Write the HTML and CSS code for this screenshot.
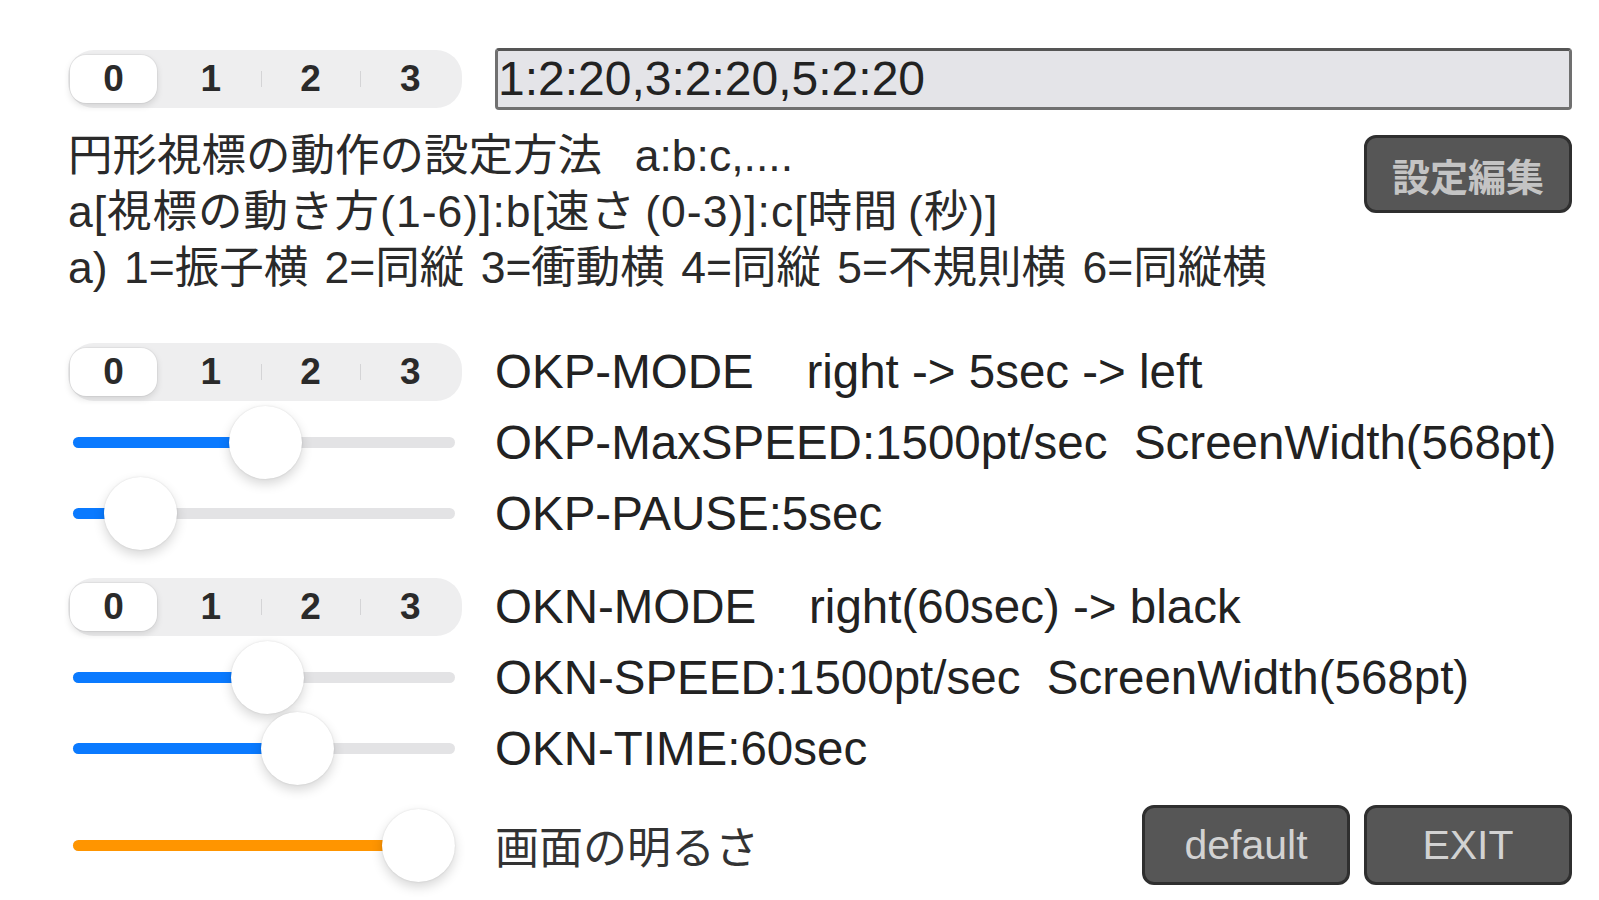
FILE: index.html
```html
<!DOCTYPE html>
<html lang="ja">
<head>
    <meta charset="UTF-8">
    <meta name="viewport" content="width=device-width, initial-scale=1.0">
    <title>視標設定</title>
    <link rel="stylesheet" href="styles.css">
</head>
<body>
    <div class="page">
        <div class="top-row">
            <div class="segmented">
                <span class="seg on">0</span><span class="seg">1</span><span class="seg sep">2</span><span class="seg sep">3</span>
            </div>
            <div class="field">1:2:20,3:2:20,5:2:20</div>
        </div>

        <div class="desc">
            <div class="desc-text">
                <p>円形視標の動作の設定方法&nbsp;&nbsp;a:b:c,....</p>
                <p class="wide">a[視標の動き方(1-6)]:b[速さ (0-3)]:c[時間 (秒)]</p>
                <p>a) 1=振子横 2=同縦 3=衝動横 4=同縦 5=不規則横 6=同縦横</p>
            </div>
            <button class="btn btn-edit">設定編集</button>
        </div>

        <div class="group okp">
            <div class="row">
                <div class="segmented">
                    <span class="seg on">0</span><span class="seg">1</span><span class="seg sep">2</span><span class="seg sep">3</span>
                </div>
                <span class="label">OKP-MODE    right -&gt; 5sec -&gt; left</span>
            </div>
            <div class="row">
                <div class="slider" style="--v: 0.506">
                    <div class="fill"></div>
                    <div class="thumb"></div>
                </div>
                <span class="label">OKP-MaxSPEED:1500pt/sec  ScreenWidth(568pt)</span>
            </div>
            <div class="row">
                <div class="slider" style="--v: 0.1">
                    <div class="fill"></div>
                    <div class="thumb"></div>
                </div>
                <span class="label">OKP-PAUSE:5sec</span>
            </div>
        </div>

        <div class="group okn">
            <div class="row">
                <div class="segmented">
                    <span class="seg on">0</span><span class="seg">1</span><span class="seg sep">2</span><span class="seg sep">3</span>
                </div>
                <span class="label">OKN-MODE    right(60sec) -&gt; black</span>
            </div>
            <div class="row">
                <div class="slider" style="--v: 0.51">
                    <div class="fill"></div>
                    <div class="thumb"></div>
                </div>
                <span class="label">OKN-SPEED:1500pt/sec  ScreenWidth(568pt)</span>
            </div>
            <div class="row">
                <div class="slider" style="--v: 0.61">
                    <div class="fill"></div>
                    <div class="thumb"></div>
                </div>
                <span class="label">OKN-TIME:60sec</span>
            </div>
        </div>

        <div class="row bottom-row">
            <div class="slider orange" style="--v: 1">
                <div class="fill"></div>
                <div class="thumb"></div>
            </div>
            <div class="bottom-right">
                <span class="label jp">画面の明るさ</span>
                <div class="buttons">
                    <button class="btn">default</button>
                    <button class="btn">EXIT</button>
                </div>
            </div>
        </div>
    </div>
</body>
</html>
```

FILE: styles.css
```css
* {
    margin: 0;
    padding: 0;
    box-sizing: border-box;
}

body, html {
    height: 100%;
    background-color: white;
    font-family: "Liberation Sans", "Noto Sans CJK JP", sans-serif;
    color: #222;
}

.page {
    padding: 48px 27px 0 68px;
}

/* top line: segmented control + pattern field */
.top-row {
    display: grid;
    grid-template-columns: 394px 1fr;
    column-gap: 33px;
    align-items: center;
}

.field {
    height: 62px;
    background-color: #e4e4e8;
    border: 3px solid #707070;
    border-top-color: #555;
    border-radius: 4px;
    font-size: 48px;
    line-height: 56px;
    color: #222;
    white-space: nowrap;
    overflow: hidden;
}

.segmented {
    display: flex;
    width: 394px;
    height: 58px;
    padding: 5px 2px;
    background-color: #eeeeef;
    border-radius: 26px;
}

.seg {
    position: relative;
    flex: 1;
    display: flex;
    align-items: center;
    justify-content: center;
    font-size: 37px;
    font-weight: bold;
    color: #2a2a2a;
}

.seg.on {
    flex: 0 0 87px;
    margin-right: 4px;
    background-color: white;
    border-radius: 16px;
    box-shadow: 0 3px 7px rgba(0, 0, 0, 0.12), 0 0 0 1px rgba(0, 0, 0, 0.04);
}

.seg.sep::before {
    content: "";
    position: absolute;
    left: 0;
    top: 50%;
    width: 1px;
    height: 16px;
    margin-top: -8px;
    background-color: #d4d4d6;
}

/* description */
.desc {
    display: flex;
    justify-content: space-between;
    align-items: flex-start;
    margin-top: 18px;
}

.desc-text p {
    font-size: 44.5px;
    line-height: 56px;
    word-spacing: 4px;
    white-space: nowrap;
    color: #2a2a2a;
}

.desc-text p.wide {
    word-spacing: -4px;
    letter-spacing: 1px;
}

.btn {
    width: 208px;
    height: 80px;
    background-color: #565656;
    border: 3px solid #2f2f2f;
    border-radius: 12px;
    color: #d2d2d2;
    font-family: "Liberation Sans", "Noto Sans CJK JP", sans-serif;
    font-size: 41px;
    cursor: pointer;
}

.btn-edit {
    height: 78px;
    margin-top: 7px;
    font-size: 38px;
    font-weight: bold;
    color: #c4c4c4;
}

/* control rows */
.group.okp {
    margin-top: 40px;
}

.group.okn {
    margin-top: 22px;
}

.row {
    display: grid;
    grid-template-columns: 394px 1fr;
    column-gap: 33px;
    align-items: center;
    height: 71px;
}

.label {
    font-size: 47.5px;
    white-space: pre;
    color: #222;
}

.label.jp {
    font-size: 44px;
    color: #333;
}

.slider {
    position: relative;
    width: 382px;
    height: 11px;
    margin-left: 5px;
    background-color: #e3e3e5;
    border-radius: 6px;
}

.slider .fill {
    width: calc(36.5px + var(--v) * 309px);
    height: 100%;
    background-color: #0a7aff;
    border-radius: 6px;
}

.slider.orange .fill {
    background-color: #ff9500;
}

.slider .thumb {
    position: absolute;
    top: 50%;
    left: calc(var(--v) * 309px);
    width: 73px;
    height: 73px;
    margin-top: -36.5px;
    background-color: white;
    border-radius: 50%;
    box-shadow: 0 5px 12px rgba(0, 0, 0, 0.16), 0 0 2px rgba(0, 0, 0, 0.12);
}

.bottom-row {
    height: 80px;
    margin-top: 21px;
}

.bottom-right {
    display: flex;
    justify-content: space-between;
    align-items: center;
}

.buttons {
    display: flex;
    gap: 14px;
}
```
